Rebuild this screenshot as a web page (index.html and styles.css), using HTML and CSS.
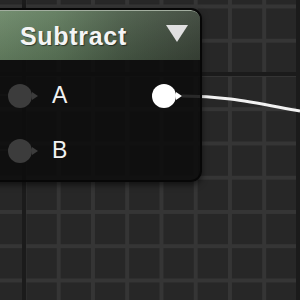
FILE: index.html
```html
<!DOCTYPE html>
<html lang="en">
<head>
    <meta charset="UTF-8">
    <title>Material Graph - Subtract</title>
    <link rel="stylesheet" href="styles.css">
</head>
<body>
    <div class="graph">
        <!-- wires sit under the nodes -->
        <svg class="wires" width="300" height="300" viewBox="0 0 300 300">
            <line x1="0" y1="95" x2="10" y2="95" class="wire-in"/>
            <line x1="0" y1="150" x2="10" y2="150" class="wire-in"/>
            <path d="M182 96 C 225 96, 250 102, 300 111" class="wire-out"/>
        </svg>

        <div class="node">
            <div class="node-header">
                <span class="node-title">Subtract</span>
                <span class="node-toggle"></span>
            </div>
            <div class="node-body">
                <div class="pin-row">
                    <div class="pin input"><span class="pin-dot"></span><span class="pin-arrow"></span></div>
                    <span class="pin-label">A</span>
                    <div class="pin output"><span class="pin-dot"></span><span class="pin-arrow"></span></div>
                </div>
                <div class="pin-row">
                    <div class="pin input"><span class="pin-dot"></span><span class="pin-arrow"></span></div>
                    <span class="pin-label">B</span>
                </div>
            </div>
        </div>
    </div>
</body>
</html>
```

FILE: styles.css
```css
/* Canvas */
body {
    margin: 0;
    padding: 0;
    background: #262626;
    font-family: "Liberation Sans", Arial, sans-serif;
    overflow: hidden;
}

.graph {
    position: relative;
    width: 300px;
    height: 300px;
    background-color: #272727;
    background-image:
        linear-gradient(to right, #1b1b1b 4px, transparent 4px),
        linear-gradient(to bottom, #1b1b1b 4px, transparent 4px),
        linear-gradient(to right, #353535 4px, transparent 4px),
        linear-gradient(to bottom, #353535 4px, transparent 4px);
    background-size: 274px 274px, 274px 274px, 34.25px 34.25px, 34.25px 34.25px;
    background-position: 22px 0, 0 72px, 22.5px 0, 0 4.5px;
}

/* Wires */
.wires {
    position: absolute;
    left: 0;
    top: 0;
}

.wire-in {
    stroke: #3a3a3a;
    stroke-width: 2;
}

.wire-out {
    fill: none;
    stroke: #f2f2f2;
    stroke-width: 3;
}

/* Node */
.node {
    position: absolute;
    left: -24px;
    top: 8px;
    width: 222px;
    height: 170px;
    border: 2px solid #070707;
    border-radius: 11px;
    background: rgba(12, 13, 12, 0.88);
    box-shadow: 0 3px 6px rgba(0, 0, 0, 0.55);
    overflow: hidden;
}

.node-header {
    display: flex;
    align-items: center;
    justify-content: space-between;
    height: 49px;
    padding: 0 12px 0 42px;
    border-top: 1px solid #a2ae9f;
    border-radius: 9px 9px 0 0;
    background:
        linear-gradient(to bottom, rgba(255, 255, 255, 0.06), rgba(0, 0, 0, 0.12)),
        linear-gradient(to right, #6f8c6b 0%, #5f7a5c 35%, #4a5c48 65%, #3b4539 100%);
}

.node-title {
    color: #f4f4f4;
    font-size: 25px;
    font-weight: bold;
    letter-spacing: 0.7px;
    text-shadow: 1px 1px 1px rgba(0, 0, 0, 0.5);
    padding-top: 1px;
}

.node-toggle {
    width: 0;
    height: 0;
    border-left: 11px solid transparent;
    border-right: 11px solid transparent;
    border-top: 17px solid #e0e0e0;
    margin-top: -5px;
}

/* Pins */
.node-body {
    display: flex;
    flex-direction: column;
    padding-top: 8px;
}

.pin-row {
    display: flex;
    align-items: center;
    height: 55px;
    padding-left: 30px;
}

.pin {
    display: flex;
    align-items: center;
}

.pin-dot {
    width: 24px;
    height: 24px;
    border-radius: 50%;
    background: #3c3c3c;
}

.pin-arrow {
    width: 0;
    height: 0;
    border-top: 4px solid transparent;
    border-bottom: 4px solid transparent;
    border-left: 6px solid #3c3c3c;
}

.pin-label {
    color: #f2f2f2;
    font-size: 23px;
    margin-left: 14px;
}

.pin.output {
    margin-left: auto;
    margin-right: 18px;
}

.pin.output .pin-dot {
    background: #ffffff;
}

.pin.output .pin-arrow {
    border-left-color: #ffffff;
}
```
